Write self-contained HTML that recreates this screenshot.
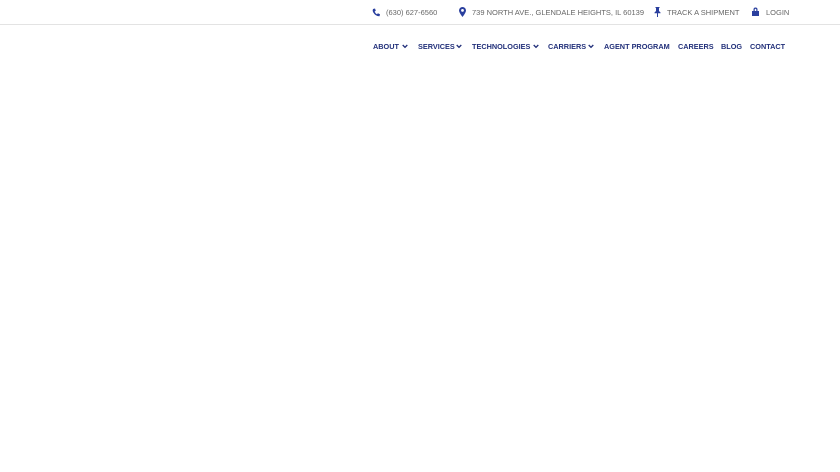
<!DOCTYPE html>
<html><head><style>
body{margin:0;width:840px;height:472px;background:#fff;font-family:"Liberation Sans",Arial,sans-serif;position:relative;overflow:hidden}
.t{position:absolute;top:7px;font-size:7.5px;color:#666;white-space:nowrap;line-height:11px}
.i{position:absolute;top:7px}
.line{position:absolute;top:24px;left:0;width:840px;height:1px;background:#e3e3e3}
.n{position:absolute;top:41px;font-size:7.3px;font-weight:bold;color:#22307a;white-space:nowrap;line-height:11px}
.c{position:absolute;top:44px}
</style></head><body>
<svg class="i" style="left:372px;top:8px" width="8" height="9" viewBox="0 0 8 9"><path d="M1 1 L3 0.5 L3.8 2.8 L2.6 3.6 Q3.6 5.6 5 6.3 L5.9 5.2 L8 6.2 L7.5 8.3 Q3.5 8.5 1 4 Q0.3 2.5 1 1Z" fill="#2a3f9e"/></svg>
<div class="t" style="left:386px">(630) 627-6560</div>
<svg class="i" style="left:459px" width="7" height="10" viewBox="0 0 7 10"><path d="M3.5 0 A3.5 3.5 0 0 1 7 3.5 Q7 5.5 3.5 10 Q0 5.5 0 3.5 A3.5 3.5 0 0 1 3.5 0Z M3.5 2 A1.4 1.4 0 1 0 3.5 4.8 A1.4 1.4 0 1 0 3.5 2Z" fill="#2a3f9e" fill-rule="evenodd"/></svg>
<div class="t" style="left:472px">739 NORTH AVE., GLENDALE HEIGHTS, IL 60139</div>
<svg class="i" style="left:654px" width="7" height="10" viewBox="0 0 7 10"><path d="M1.5 0H5.5V1H5V4L6.5 5.5V6.3H4V10H3V6.3H0.5V5.5L2 4V1H1.5Z" fill="#2a3f9e"/></svg>
<div class="t" style="left:667px">TRACK A SHIPMENT</div>
<svg class="i" style="left:752px" width="7" height="9" viewBox="0 0 7 9"><path d="M1.5 4V2.5A2 2 0 0 1 5.5 2.5V4H7V9H0V4Z M2.7 4H4.3V2.5A0.8 0.8 0 0 0 2.7 2.5Z" fill="#2a3f9e" fill-rule="evenodd"/></svg>
<div class="t" style="left:766px">LOGIN</div>
<div class="line"></div>
<div class="n" style="left:373px">ABOUT</div>
<svg class="c" style="left:402px" width="6" height="5" viewBox="0 0 6 5"><path d="M0.7 1L3 3.3L5.3 1" stroke="#22307a" stroke-width="1.3" fill="none"/></svg>
<div class="n" style="left:418px">SERVICES</div>
<svg class="c" style="left:456px" width="6" height="5" viewBox="0 0 6 5"><path d="M0.7 1L3 3.3L5.3 1" stroke="#22307a" stroke-width="1.3" fill="none"/></svg>
<div class="n" style="left:472px">TECHNOLOGIES</div>
<svg class="c" style="left:533px" width="6" height="5" viewBox="0 0 6 5"><path d="M0.7 1L3 3.3L5.3 1" stroke="#22307a" stroke-width="1.3" fill="none"/></svg>
<div class="n" style="left:548px">CARRIERS</div>
<svg class="c" style="left:588px" width="6" height="5" viewBox="0 0 6 5"><path d="M0.7 1L3 3.3L5.3 1" stroke="#22307a" stroke-width="1.3" fill="none"/></svg>
<div class="n" style="left:604px">AGENT PROGRAM</div>
<div class="n" style="left:678px">CAREERS</div>
<div class="n" style="left:721px">BLOG</div>
<div class="n" style="left:750px">CONTACT</div>
</body></html>
